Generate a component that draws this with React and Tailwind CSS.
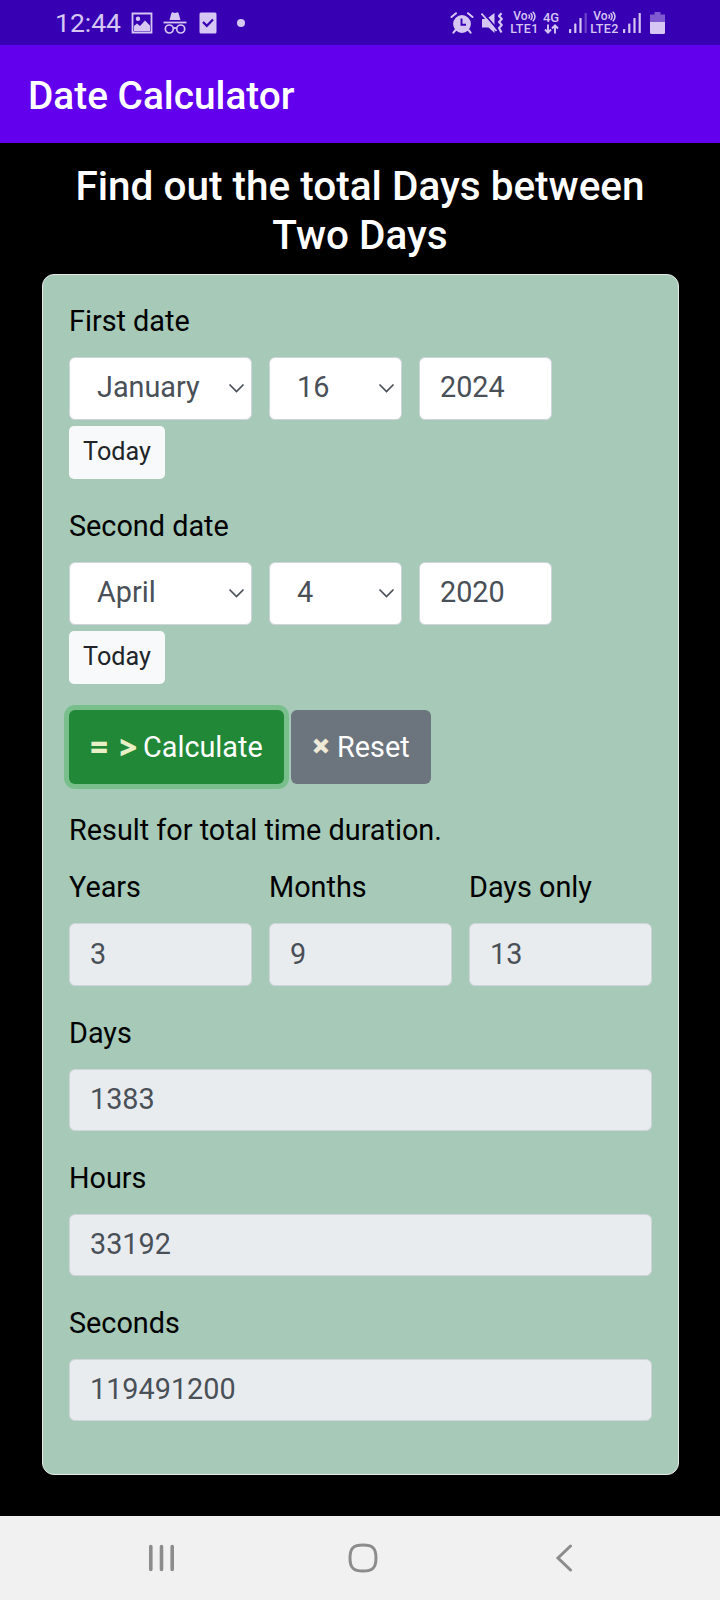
import React from "react";

const months = ["January", "February", "March", "April", "May", "June", "July", "August", "September", "October", "November", "December"];

const totals = [
  { label: "Days", value: "1383" },
  { label: "Hours", value: "33192" },
  { label: "Seconds", value: "119491200" },
];

const Signal = ({ weak }) => (
  <svg width="20" height="22" viewBox="0 0 20 22" fill="#d5c6f3">
    <rect x="1" y="17" width="2.2" height="4" rx="0.6" />
    <rect x="6.2" y="11.5" width="2.2" height="9.5" rx="0.6" />
    <rect x="11.4" y="6" width="2.2" height="15" rx="0.6" />
    <rect x="16.6" y="1" width="2.2" height="20" rx="0.6" opacity={weak ? 0.35 : 1} />
  </svg>
);

const VoLte = ({ slot }) => (
  <div className="w-[27px] text-[12px] leading-[11px] font-medium whitespace-nowrap flex flex-col items-center">
    <div className="flex justify-center items-center h-[11px]">
      Vo
      <svg width="8" height="11" viewBox="0 0 8 11" fill="none" stroke="#d5c6f3" strokeWidth="1.5" strokeLinecap="round">
        <path d="M1 4Q2.2 5.5 1 7M3 2.5Q5.4 5.5 3 8.500M5.200 1.200Q8.800 5.500 5.200 9.800" />
      </svg>
    </div>
    <div className="mt-px text-[12.5px] tracking-[0.4px]">LTE{slot}</div>
  </div>
);

const StatusBar = () => (
  <div className="h-[45px] bg-[#3700b3] text-[#d5c6f3] flex items-center justify-between pl-[55px] pr-[54px]">
    <div className="flex items-center">
      <span className="w-[66px] text-[26.5px] leading-[30px] mt-px">12:44</span>
      <svg className="ml-[10px]" width="22" height="22" viewBox="0 0 22 22" fill="none">
        <path d="M1.5 1.5H20.5V20.5H1.5Z" stroke="#d5c6f3" strokeWidth="1.8" />
        <circle cx="7" cy="6.8" r="2.2" fill="#d5c6f3" />
        <path d="M3 17V14L6 11.5L9 14L14 8.5L19 13.5V19H3Z" fill="#d5c6f3" />
      </svg>
      <svg className="ml-[10px]" width="24" height="22" viewBox="0 0 24 22" fill="none">
        <path d="M6.5 8L8.4 1.2Q9 0 10.2 0.5L12 1L13.8 0.5Q15 0 15.6 1.2L17.5 8Z" fill="#d5c6f3" />
        <path d="M0.5 10.5H23.5" stroke="#d5c6f3" strokeWidth="1.8" />
        <circle cx="6.3" cy="17" r="4" stroke="#d5c6f3" strokeWidth="1.7" />
        <circle cx="17.7" cy="17" r="4" stroke="#d5c6f3" strokeWidth="1.7" />
        <path d="M10.3 16.5Q12 15.3 13.7 16.5" stroke="#d5c6f3" strokeWidth="1.7" />
      </svg>
      <svg className="ml-[12px]" width="18" height="22" viewBox="0 0 18 22" fill="none">
        <rect x="0.5" y="0.5" width="17" height="21" rx="1.5" fill="#d5c6f3" />
        <path d="M4 10L7.8 13.8L14 7.5" stroke="#3700b3" strokeWidth="2.3" />
      </svg>
      <span className="ml-[20px] h-2 w-2 rounded-full bg-[#d5c6f3]"></span>
    </div>
    <div className="flex items-center">
      <svg width="24" height="22" viewBox="0 0 24 22" fill="none">
        <circle cx="12" cy="12" r="8.9" fill="#d5c6f3" />
        <path d="M1.5 5L6 1.2M22.5 5L18 1.2M5.5 18L3.4 20.6M18.5 18L20.6 20.6" stroke="#d5c6f3" strokeWidth="2" strokeLinecap="round" />
        <path d="M11.5 6.5V12.8H16" stroke="#3700b3" strokeWidth="1.9" />
      </svg>
      <svg className="ml-[7px]" width="23" height="22" viewBox="0 0 23 22" fill="none">
        <path d="M1 7H5.5L13.5 1V21L7.5 15.5H1Z" fill="#d5c6f3" />
        <path d="M1.9 0.5L17 18" stroke="#3700b3" strokeWidth="1.8" />
        <path d="M0.5 1.5L15.5 19" stroke="#d5c6f3" strokeWidth="1.8" />
        <path d="M20.5 1.2L18 4L20.8 7L18 10L20.8 13L18 16L20.5 20.5" stroke="#d5c6f3" strokeWidth="2.2" strokeLinejoin="round" />
      </svg>
      <div className="ml-[7px]"><VoLte slot="1" /></div>
      <div className="ml-[4px] w-[18px] flex flex-col items-center">
        <span className="text-[13px] leading-[12px] font-medium">4G</span>
        <svg width="15" height="10" viewBox="0 0 15 10" fill="none" stroke="#d5c6f3" strokeWidth="1.9">
          <path d="M4 0.5V8.5M1 5.5L4 8.6L7 5.5M11 9.5V1.5M8 4.5L11 1.4L14 4.5" />
        </svg>
      </div>
      <div className="ml-[8px]"><Signal weak /></div>
      <div className="ml-[3px]"><VoLte slot="2" /></div>
      <div className="ml-[4px]"><Signal /></div>
      <svg className="ml-[8px] mr-px" width="15" height="22" viewBox="0 0 15 22" fill="#d5c6f3">
        <path d="M4.5 0H10.5V2.5H15V10H0V2.5H4.5Z" opacity="0.45" />
        <path d="M0 10H15V20.5Q15 22 13.5 22H1.5Q0 22 0 20.5Z" />
      </svg>
    </div>
  </div>
);

const Select = ({ options, value, className }) => (
  <div className={`relative h-[63px] ${className}`}>
    <select
      defaultValue={value}
      className="appearance-none w-full h-full rounded-[6px] bg-white border border-[#ced4da] pl-[27px] pb-px text-[28.8px] text-[#495057]"
    >
      {options.map((o) => (
        <option key={o}>{o}</option>
      ))}
    </select>
    <svg className="absolute right-[7px] top-[26px]" width="17" height="11" viewBox="0 0 17 11" fill="none">
      <path d="M1.5 1.5L8.5 8.5L15.5 1.5" stroke="#495057" strokeWidth="1.7" />
    </svg>
  </div>
);

const DateRow = ({ label, month, day, year }) => (
  <div className="h-[205px]">
    <label className="block h-[57px] leading-[43px]">{label}</label>
    <div className="flex gap-[17px]">
      <Select options={months} value={month} className="w-[183px]" />
      <Select options={Array.from({ length: 31 }, (_, i) => String(i + 1))} value={day} className="w-[133px]" />
      <input
        defaultValue={year}
        className="w-[133px] h-[63px] rounded-[6px] bg-white border border-[#ced4da] pl-[20px] pb-[3px] text-[#495057]"
      />
    </div>
    <button className="block mt-[6px] w-[96px] h-[53px] rounded-[5px] bg-[#f8f9fa] pb-px text-[25.2px] text-[#212529]">Today</button>
  </div>
);

const Result = ({ label, value, className = "", size = "h-[62px] pb-[3px]" }) => (
  <div className={className}>
    <label className="block leading-[42px]">{label}</label>
    <input
      readOnly
      value={value}
      className={`mt-[15px] block w-full ${size} rounded-[6px] bg-[#e9ecef] border border-[#ced4da] pl-[20px] text-[#495057]`}
    />
  </div>
);

const NavBar = () => (
  <div className="h-[84px] bg-[#f1f1f1] flex items-center pl-[148px] pb-px">
    <svg width="27" height="28" viewBox="0 0 27 28" stroke="#8c8c8c" strokeWidth="3.6" strokeLinecap="round">
      <path d="M2.8 2.5V25.5M13.5 2.5V25.5M24.2 2.5V25.5" />
    </svg>
    <svg className="ml-[173px]" width="30" height="30" viewBox="0 0 30 30" fill="none" stroke="#8c8c8c" strokeWidth="3">
      <path d="M15 2C24.5 2 28 5 28 15S24.5 28 15 28S2 25 2 15S5.5 2 15 2Z" />
    </svg>
    <svg className="ml-[177px]" width="18" height="28" viewBox="0 0 18 28" fill="none" stroke="#8c8c8c" strokeWidth="3" strokeLinecap="round">
      <path d="M15.5 2L3 14L15.5 26" />
    </svg>
  </div>
);

const App = () => {
  return (
    <div className="w-[720px] h-[1600px] bg-black flex flex-col overflow-hidden font-['Roboto',sans-serif]">
      <StatusBar />
      <header className="h-[98px] bg-[#6200ee] flex items-center pl-[28px]">
        <h1 className="text-[38.8px] leading-[48px] font-medium text-white mt-[3px]">Date Calculator</h1>
      </header>
      <main className="flex-1 px-[42px] pt-[19px] text-[28.8px] text-black">
        <h2 className="text-center text-[40.5px] leading-[49px] font-medium text-white">
          Find out the total Days between
          <br />
          Two Days
        </h2>
        <section className="mt-[14px] w-[637px] h-[1201px] rounded-[12px] border border-[#e4e9e6] bg-[#a6c9b8] px-[26px] pt-[25px]">
          <DateRow label="First date" month="January" day="16" year="2024" />
          <DateRow label="Second date" month="April" day="4" year="2020" />
          <div className="flex gap-[7px]">
            <button className="w-[215px] h-[74px] rounded-[6px] bg-[#218838] ring-5 ring-[#78bf8c] text-white flex items-center pl-[21px] pt-px">
              <b className="w-[53px] pb-[2px] text-left font-['Noto_Sans',sans-serif] font-black text-[31px] leading-[32px] [word-spacing:3px] text-[#e9efc7]">= &gt;</b>
              Calculate
            </button>
            <button className="w-[140px] h-[74px] rounded-[6px] bg-[#6c757d] text-white flex items-center pl-[20px] pt-px">
              <b className="w-[26px] pb-[5px] text-left font-['Noto_Sans',sans-serif] font-black text-[34px] leading-[32px] text-[#efe9d7]">×</b>
              Reset
            </button>
          </div>
          <p className="mt-[25px] leading-[42px]">Result for total time duration.</p>
          <div className="mt-[15px] flex gap-[17px]">
            <Result label="Years" value="3" className="w-[183px]" size="h-[63px] pb-px" />
            <Result label="Months" value="9" className="w-[183px]" size="h-[63px] pb-px" />
            <Result label="Days only" value="13" className="w-[183px]" size="h-[63px] pb-px" />
          </div>
          {totals.map((t) => (
            <Result key={t.label} label={t.label} value={t.value} className="mt-[26px]" />
          ))}
        </section>
      </main>
      <NavBar />
    </div>
  );
};

export default App;
